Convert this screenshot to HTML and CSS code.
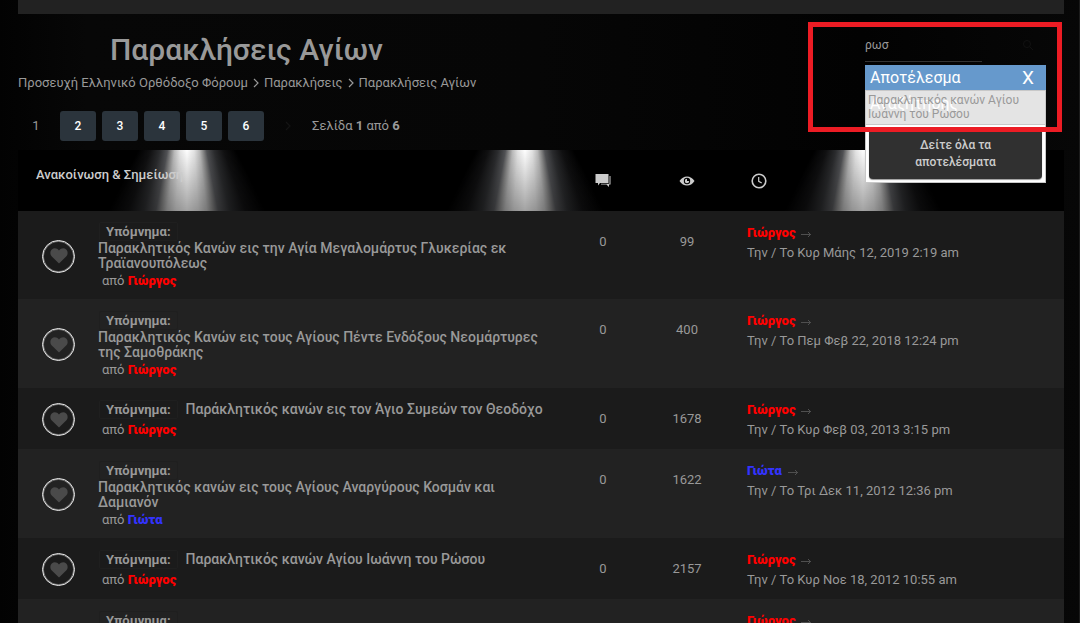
FILE: index.html
```html
<!DOCTYPE html>
<html lang="el">
<head>
<meta charset="utf-8">
<meta name="viewport" content="width=device-width, initial-scale=1">
<title>Παρακλήσεις Αγίων</title>
<link rel="stylesheet" href="styles.css">
</head>
<body>
<svg class="symbols" aria-hidden="true">
  <symbol id="heart" viewBox="0 0 18 16"><path d="M9 15.6 1.8 8.6C-.2 6.500 0 3.200 1.800 1.500 3.800-.4 7-.1 9 2.400 11-.1 14.200-.4 16.200 1.500 18 3.200 18.200 6.500 16.200 8.600Z" fill="#4a4a4a"/></symbol>
  <symbol id="arrow" viewBox="0 0 12 8"><path d="M1 4.500H11M8 2 10.500 4.500 8 7" fill="none" stroke="#4f4f4f"/></symbol>
  <symbol id="chevron" viewBox="0 0 6 10"><path d="M1 1 5 5 1 9" fill="none" stroke="currentColor" stroke-width="1.2"/></symbol>
</svg>
<div class="page">
  <div class="topbar"></div>
  <header class="head">
    <div class="intro">
      <h1>Παρακλήσεις Αγίων</h1>
      <nav class="crumbs">
        <a href="#">Προσευχή Ελληνικό Ορθόδοξο Φόρουμ</a>
        <svg><use href="#chevron"/></svg>
        <a href="#">Παρακλήσεις</a>
        <svg><use href="#chevron"/></svg>
        <a href="#">Παρακλήσεις Αγίων</a>
      </nav>
      <nav class="pages">
        <span class="current">1</span>
        <a href="#">2</a><a href="#">3</a><a href="#">4</a><a href="#">5</a><a href="#">6</a>
        <a class="next" href="#" aria-label="Επόμενη"><svg><use href="#chevron"/></svg></a>
        <span class="count">Σελίδα <b>1</b> από <b>6</b></span>
      </nav>
    </div>
    <form class="search">
      <input type="text" value="ρωσ" aria-label="Αναζήτηση">
      <svg class="lens" viewBox="0 0 12 12"><circle cx="5" cy="5" r="3.500" fill="none" stroke="#111"/><path d="M8 8l3 3" stroke="#111"/></svg>
      <div class="results">
        <div class="results-head"><span>Αποτέλεσμα</span><button type="button">X</button></div>
        <div class="hit"><span class="ghost">Αναζήτησης</span><a href="#">Παρακλητικός κανών Αγίου Ιωάννη του Ρώσου</a></div>
        <div class="more"><button type="button">Δείτε όλα τα αποτελέσματα</button></div>
      </div>
      <div class="marker"></div>
    </form>
  </header>
  <table class="topics">
    <colgroup><col class="c-icon"><col><col class="c-num"><col class="c-num"><col class="c-last"></colgroup>
    <thead>
      <tr>
        <th colspan="2" class="label">Ανακοίνωση &amp; Σημείωση</th>
        <th><svg viewBox="0 0 16 16"><path d="M.5 1H13.500v9H5L3 12.500V10H.5Z" fill="#ccc"/><path d="M14.500 3h1v8.500H14v2.500l-2.500-2.500H6v-.8h8.500Z" fill="#ccc"/></svg></th>
        <th><svg viewBox="0 0 16 16"><path d="M.5 8C2.500 5 5 3.500 8 3.500S13.500 5 15.500 8C13.500 11 11 12.500 8 12.500S2.500 11 .5 8Z" fill="#ccc"/><circle cx="8" cy="8" r="3.200" fill="#000"/><path d="M8 5.800A2.200 2.200 0 1 0 10.200 8H8Z" fill="#ccc"/></svg></th>
        <th class="last"><svg viewBox="0 0 16 16"><circle cx="8" cy="8" r="6.800" fill="none" stroke="#ccc" stroke-width="1.600"/><path d="M7.700 4v4.300l3 1.800" fill="none" stroke="#ccc" stroke-width="1.200"/></svg></th>
      </tr>
    </thead>
    <tbody>
      <tr>
        <td class="icon"><span><svg><use href="#heart"/></svg></span></td>
        <td><div class="subject"><b>Υπόμνημα:</b><a href="#">Παρακλητικός Κανών εις την Αγία Μεγαλομάρτυς Γλυκερίας εκ Τραϊανουπόλεως</a></div><p class="by">από <a class="red" href="#">Γιώργος</a></p></td>
        <td class="num">0</td><td class="num">99</td>
        <td class="last"><a class="red" href="#">Γιώργος</a><svg><use href="#arrow"/></svg><br>Την / Το Κυρ Μάης 12, 2019 2:19 am</td>
      </tr>
      <tr>
        <td class="icon"><span><svg><use href="#heart"/></svg></span></td>
        <td><div class="subject"><b>Υπόμνημα:</b><a href="#">Παρακλητικός Κανών εις τους Αγίους Πέντε Ενδόξους Νεομάρτυρες της Σαμοθράκης</a></div><p class="by">από <a class="red" href="#">Γιώργος</a></p></td>
        <td class="num">0</td><td class="num">400</td>
        <td class="last"><a class="red" href="#">Γιώργος</a><svg><use href="#arrow"/></svg><br>Την / Το Πεμ Φεβ 22, 2018 12:24 pm</td>
      </tr>
      <tr>
        <td class="icon"><span><svg><use href="#heart"/></svg></span></td>
        <td><div class="subject"><b>Υπόμνημα:</b><a href="#">Παράκλητικός κανών εις τον Άγιο Συμεών τον Θεοδόχο</a></div><p class="by">από <a class="red" href="#">Γιώργος</a></p></td>
        <td class="num">0</td><td class="num">1678</td>
        <td class="last"><a class="red" href="#">Γιώργος</a><svg><use href="#arrow"/></svg><br>Την / Το Κυρ Φεβ 03, 2013 3:15 pm</td>
      </tr>
      <tr>
        <td class="icon"><span><svg><use href="#heart"/></svg></span></td>
        <td><div class="subject"><b>Υπόμνημα:</b><a href="#">Παρακλητικός κανών εις τους Αγίους Αναργύρους Κοσμάν και Δαμιανόν</a></div><p class="by">από <a class="blue" href="#">Γιώτα</a></p></td>
        <td class="num">0</td><td class="num">1622</td>
        <td class="last"><a class="blue" href="#">Γιώτα</a><svg><use href="#arrow"/></svg><br>Την / Το Τρι Δεκ 11, 2012 12:36 pm</td>
      </tr>
      <tr>
        <td class="icon"><span><svg><use href="#heart"/></svg></span></td>
        <td><div class="subject"><b>Υπόμνημα:</b><a href="#">Παρακλητικός κανών Αγίου Ιωάννη του Ρώσου</a></div><p class="by">από <a class="red" href="#">Γιώργος</a></p></td>
        <td class="num">0</td><td class="num">2157</td>
        <td class="last"><a class="red" href="#">Γιώργος</a><svg><use href="#arrow"/></svg><br>Την / Το Κυρ Νοε 18, 2012 10:55 am</td>
      </tr>
      <tr class="partial">
        <td class="icon"><span><svg><use href="#heart"/></svg></span></td>
        <td><div class="subject"><b>Υπόμνημα:</b></div></td>
        <td></td><td></td>
        <td class="last"><a class="red" href="#">Γιώργος</a><svg><use href="#arrow"/></svg></td>
      </tr>
    </tbody>
  </table>
</div>
</body>
</html>
```
FILE: styles.css
```css
* { box-sizing: border-box; }
html { background: #050505; height: 100%; overflow: hidden; }
body {
  margin: 0;
  height: 100%;
  overflow: hidden;
  border-right: 1px solid #1c1c1c;
  background: linear-gradient(90deg, #020202, #070707 8%, #060606 50%, #020202 80%, #070707);
  color: #999;
  font: 13px/20px Roboto, "Noto Sans", sans-serif;
}
a { color: inherit; text-decoration: none; }
button, input { font: inherit; color: inherit; }
.symbols { position: absolute; width: 0; height: 0; }
.page { margin: 0 15px 0 18px; }
.topbar { height: 14px; background: #222; }

.head { display: flex; justify-content: space-between; height: 136px; }
.intro { padding-top: 16px; }
h1 { margin: 0 0 3px 92px; font-size: 30px; line-height: 40px; font-weight: 500; }
.crumbs { display: flex; align-items: center; gap: 5px; }
.crumbs svg { width: 6px; height: 10px; }
.pages { display: flex; align-items: center; gap: 6px; margin-top: 18px; }
.pages a, .current { width: 36px; line-height: 30px; text-align: center; border-radius: 3px; }
.pages a { background: #2b343c; color: #fff; font-size: 12px; font-weight: 500; }
.pages .next { background: none; color: #141414; display: flex; justify-content: center; }
.next svg { width: 6px; height: 10px; }

.search { position: relative; width: 199px; padding-top: 14px; }
.search input {
  display: block;
  width: 117px;
  height: 34px;
  padding: 0;
  border: 0;
  border-bottom: 1px solid #333;
  background: none;
  outline: 0;
  font-size: 12px;
}
.lens { position: absolute; left: 157px; top: 25px; width: 12px; height: 12px; }
.results { position: absolute; z-index: 2; left: 0; top: 51px; width: 181px; background: #fff; border: 1px solid #c8c8c8; border-top: 0; }
.results-head {
  display: flex;
  justify-content: space-between;
  margin: 0 -1px;
  padding: 0 12px 0 5px;
  background: #69c;
  color: #fff;
  font-size: 16px;
  line-height: 25px;
}
.results-head button { padding: 0; border: 0; background: none; font-size: 19px; }
.hit { position: relative; padding: 2px 2px 3px; background: #e4e4e4; border: solid #c8c8c8; border-width: 1px 0; font-size: 12px; line-height: 14px; }
.hit a { display: block; position: relative; }
.ghost { position: absolute; left: 4px; top: 3px; font-size: 16px; line-height: 20px; color: #fff; }
.more { padding: 3px; }
.more button {
  display: block;
  width: 100%;
  padding: 9px 30px 8px;
  border: 0;
  border-radius: 4px;
  background: #303030;
  box-shadow: 0 1px 1px #999;
  color: #ccc;
  font-size: 12px;
  font-weight: 500;
  line-height: 17px;
}
.marker { position: absolute; z-index: 3; left: -57px; right: 2px; top: 8px; height: 110px; border: 5px solid #ec1c24; pointer-events: none; }

.topics { width: 100%; table-layout: fixed; border-collapse: collapse; }
.c-icon { width: 80px; }
.c-num { width: 84px; }
.c-last { width: 335px; }
thead {
  background:
    linear-gradient(rgba(0, 0, 0, 0), rgba(0, 0, 0, .36)),
    conic-gradient(from 150deg at 50% -100px, #000 0deg 4deg, #101011 10deg, #2b2c2e 15deg, #515255 19deg, #888 21deg, #bbb 23deg, #e4e4e4 26deg, #fff 30deg, #e4e4e4 34deg, #bbb 37deg, #888 39deg, #515255 41deg, #2b2c2e 45deg, #101011 50deg, #000 56deg 360deg);
  background-size: 338px 100%;
}
th { height: 61px; padding: 0; color: #ccc; font-weight: 500; }
th svg { display: block; width: 16px; height: 16px; margin: 0 auto; }
.label { padding: 0 0 12px 18px; text-align: left; }
td { height: 61px; padding: 12px 0 8px; vertical-align: top; }
tbody tr:first-child td { padding-top: 11px; }
tbody tr:nth-child(odd) { background: #1b1b1b; }
tbody tr:nth-child(even) { background: #222; }
td.icon, tbody tr:first-child td.icon { padding: 2px 0 0; vertical-align: middle; }
.partial { height: 89px; }
.icon span {
  display: flex;
  align-items: center;
  justify-content: center;
  width: 33px;
  height: 33px;
  margin-left: 24px;
  border: 1px solid #eee;
  border-radius: 50%;
  box-shadow: inset 0 0 0 1px #777;
}
.icon svg { width: 18px; height: 16px; }
.subject { display: flex; flex-wrap: wrap; align-items: center; column-gap: 8px; min-height: 20px; align-content: flex-start; line-height: 15px; padding-right: 12px; }
.subject b { padding: 1px 6px; margin-left: 1px; border: 1px solid #1f1f1f; border-radius: 2px; }
.subject a { font-size: 14px; font-weight: 500; }
.by { margin: 0; padding-left: 4px; }
.red, .blue { font-weight: 900; }
.red { color: #f00; }
.blue { color: #33f; }
tbody td.num, tbody tr:first-child td.num { padding-top: 21px; text-align: center; }
tbody td.last, tbody tr:first-child td.last { padding: 12px 0 0 18px; }
th.last { padding-left: 22px; }
th.last svg { margin: 0; }
td.last svg { width: 12px; height: 8px; margin-left: 5px; vertical-align: -1px; }
```
